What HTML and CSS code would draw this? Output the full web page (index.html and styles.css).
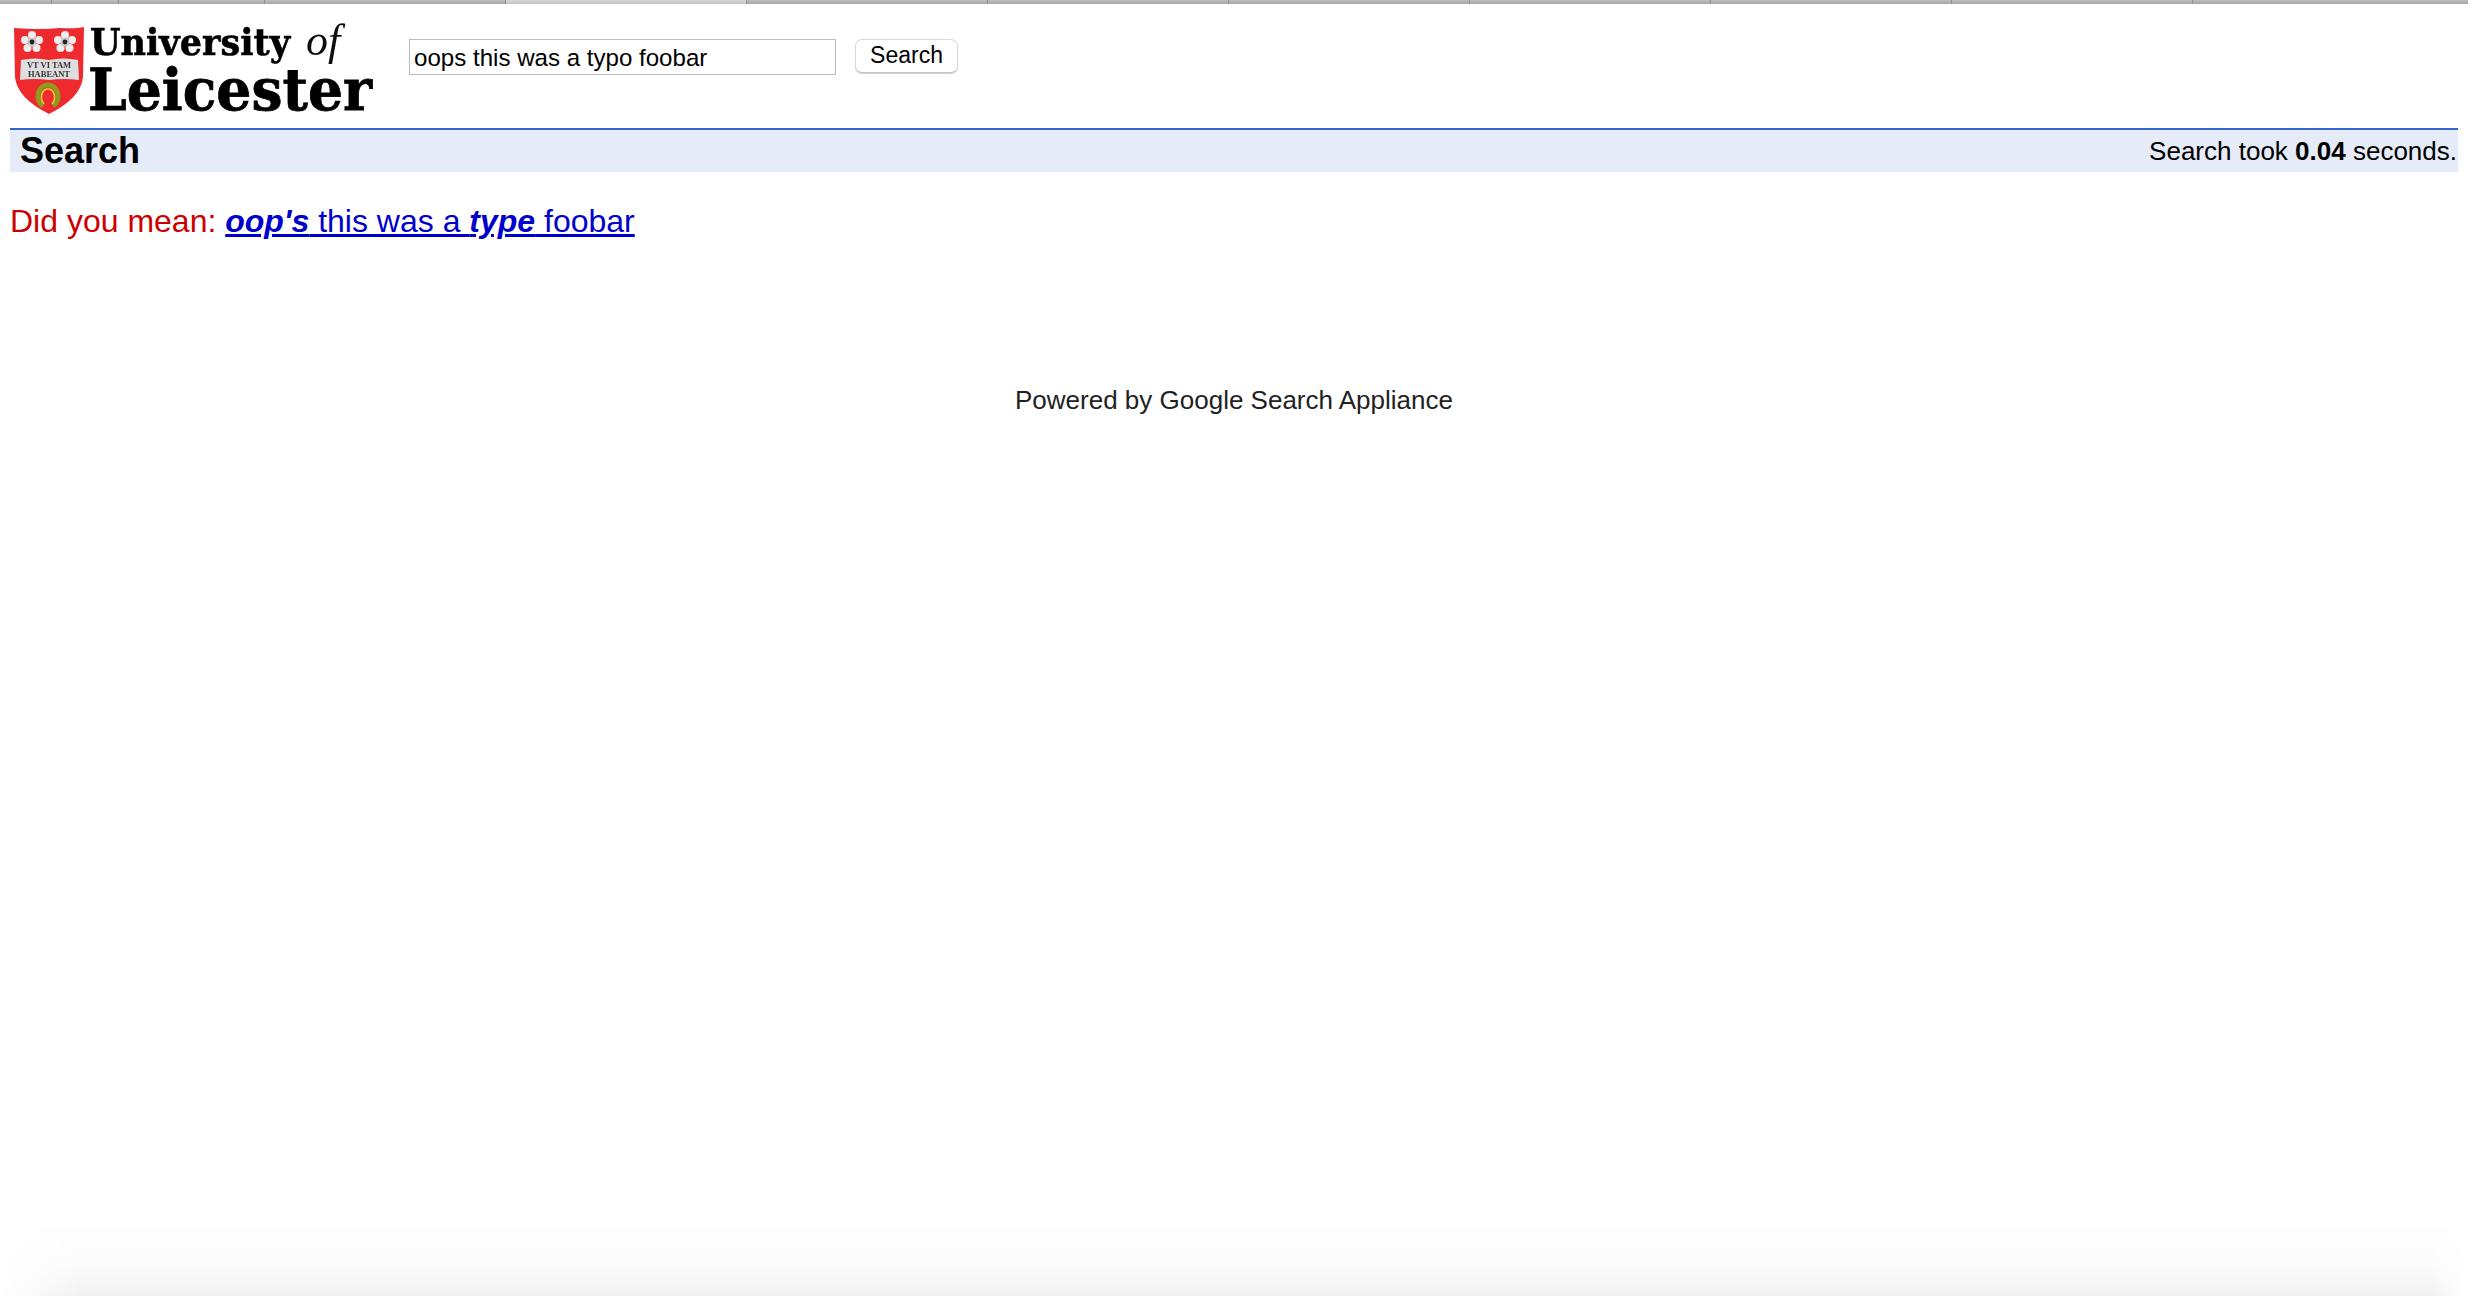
FILE: index.html
```html
<!DOCTYPE html>
<html lang="en">
<head>
<meta charset="utf-8">
<title>Search</title>
<link rel="stylesheet" href="styles.css">
</head>
<body>
<div class="tabstrip">
  <span class="tab t1"></span><span class="tab t2"></span><span class="tab t3"></span><span class="tab t4"></span><span class="tab tab-active t5"></span><span class="tab t6"></span><span class="tab t7"></span><span class="tab t8"></span><span class="tab t9"></span><span class="tab t10"></span><span class="tab t11"></span>
</div>
<header class="masthead">
  <svg class="logo" width="374" height="100" viewBox="0 0 374 100" aria-label="University of Leicester">
    <defs><filter id="soft" x="-2%" y="-5%" width="104%" height="110%"><feGaussianBlur stdDeviation="0.6"/></filter></defs>
    <g filter="url(#soft)">
      <path d="M4 4 Q30 6 50 4 Q66 5 74 3 L73 53 Q71 74 39 90 Q7 74 5 53 Z" fill="#ee2a2e"/>
      <g class="rose" transform="translate(22 18)">
        <circle cx="0" cy="-7" r="4"/><circle cx="7" cy="-2" r="4"/><circle cx="4.5" cy="6" r="4"/><circle cx="-4.5" cy="6" r="4"/><circle cx="-7" cy="-2" r="4"/><circle class="rose-mid" r="4.5"/><circle class="rose-eye" r="2.4"/>
      </g>
      <g class="rose" transform="translate(55 18)">
        <circle cx="0" cy="-7" r="4"/><circle cx="7" cy="-2" r="4"/><circle cx="4.5" cy="6" r="4"/><circle cx="-4.5" cy="6" r="4"/><circle cx="-7" cy="-2" r="4"/><circle class="rose-mid" r="4.5"/><circle class="rose-eye" r="2.4"/>
      </g>
      <path d="M11 36 Q25 33 39 36 Q54 33 68 36 L69 56 Q54 54 39 56 Q24 54 10 56 Z" fill="#dedede"/>
      <text class="motto" x="39" y="44" text-anchor="middle">VT VI TAM</text>
      <text class="motto" x="39" y="53" text-anchor="middle">HABEANT</text>
      <path d="M33 82 C24 76 28 61 38 61 C48 61 52 76 43 82" fill="none" stroke="#8d9a1e" stroke-width="5"/>
      <path d="M34 80 C29 74 32 65 38 65 C44 65 47 74 42 80" fill="none" stroke="#e9d33a" stroke-width="1.5"/>
    </g>
    <g class="logo-text" filter="url(#soft)">
      <text class="logo-small" x="80" y="31" textLength="200" lengthAdjust="spacingAndGlyphs">University</text>
      <text class="logo-of" x="296" y="31">of</text>
      <text class="logo-big" x="78" y="86" textLength="284" lengthAdjust="spacingAndGlyphs">Leicester</text>
    </g>
  </svg>
  <form class="searchform">
    <input class="q" type="text" value="oops this was a typo foobar">
    <button class="go" type="button">Search</button>
  </form>
</header>
<div class="titlebar">
  <h1 class="title">Search</h1>
  <div class="timing">Search took <b>0.04</b> seconds.</div>
</div>
<p class="spell">Did you mean: <a href="#"><b><i>oop's</i></b> this was a <b><i>type</i></b> foobar</a></p>
<footer class="powered">Powered by Google Search Appliance</footer>
<div class="window-shade"></div>
</body>
</html>
```
FILE: styles.css
```css
html, body { margin: 0; padding: 0; background: #fff; }
body { font-family: "Liberation Sans", Arial, sans-serif; color: #000; height: 1296px; overflow: hidden; position: relative; }

.tabstrip { display: flex; height: 4px; background: linear-gradient(#bdbdbd, #a6a6a6); }
.tab { display: block; height: 4px; border-right: 1px solid #8f8f8f; box-sizing: border-box; width: 241px; flex: none; }
.t1 { width: 52px; } .t2 { width: 67px; } .t3 { width: 146px; }
.tab-active { background: linear-gradient(#d6d6d6, #c4c4c4); }

.masthead { display: flex; align-items: flex-start; height: 124px; }
.logo { margin: 20px 0 0 10px; flex: none; overflow: visible; }
.logo-small { font: bold 37px "DejaVu Serif", serif; fill: #000; stroke: #000; stroke-width: .6px; }
.logo-of { font: italic 44px "Liberation Serif", serif; fill: #111; }
.logo-big { font: bold 57px "DejaVu Serif", serif; fill: #000; stroke: #000; stroke-width: .8px; }
.motto { font: bold 8.5px "Liberation Serif", serif; fill: #333; }
.rose circle { fill: #eeeeee; }
.rose .rose-mid { fill: #c9c9c9; }
.rose .rose-eye { fill: #222; }

.searchform { display: flex; align-items: flex-start; margin: 35px 0 0 25px; }
.q { box-sizing: border-box; width: 427px; height: 36px; margin: 0; padding: 1px 4px 0; border: 1px solid #bcbcbc; border-radius: 0; font: 24.1px "Liberation Sans", sans-serif; color: #000; outline: none; background: #fff; }
.go { box-sizing: border-box; width: 103px; height: 34px; margin: 0 0 0 19px; padding: 0 0 2px; background: #fff; border: 1px solid #dadada; border-bottom-color: #c4c4c4; border-radius: 7px; box-shadow: 0 1px 1px rgba(0,0,0,.18); font: 23px "Liberation Sans", sans-serif; color: #000; }

.titlebar { display: flex; justify-content: space-between; align-items: center; box-sizing: border-box; height: 44px; margin: 0 10px; padding: 0 1px 0 10px; background: #e5ebf7; border-top: 2px solid #3366cc; }
.title { margin: 0; font-size: 36px; font-weight: bold; line-height: 38px; }
.timing { font-size: 26px; line-height: 40px; }

.spell { margin: 29px 0 0 10px; font-size: 32px; line-height: 40px; color: #cc0000; }
.spell a { color: #0000cc; text-decoration: underline; }

.powered { margin-top: 143px; text-align: center; font-size: 26px; line-height: 32px; color: #222; }

.window-shade { position: absolute; left: 0; right: 0; bottom: 0; height: 76px; pointer-events: none; background: linear-gradient(rgba(0,0,0,0), rgba(0,0,0,.008) 35%, rgba(0,0,0,.02) 65%, rgba(0,0,0,.05)); -webkit-mask-image: linear-gradient(90deg, transparent 0, #000 80px, #000 calc(100% - 40px), transparent 100%); mask-image: linear-gradient(90deg, transparent 0, #000 80px, #000 calc(100% - 40px), transparent 100%); }
```
